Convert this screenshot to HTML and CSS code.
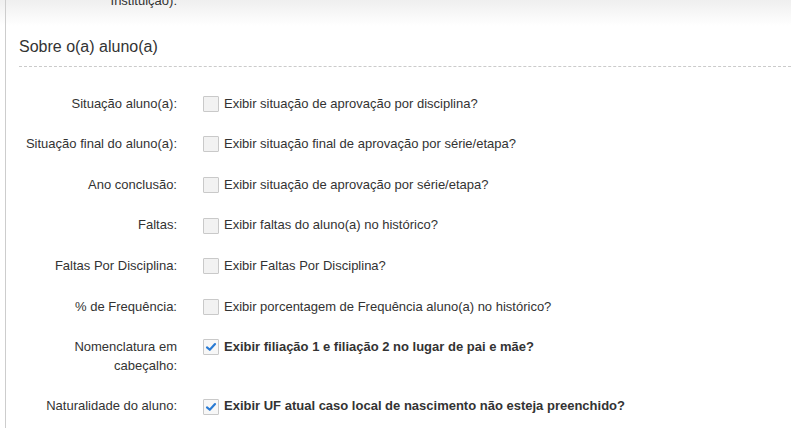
FILE: index.html
```html
<!DOCTYPE html>
<html lang="pt-BR">
<head>
<meta charset="utf-8">
<title>Sobre o(a) aluno(a)</title>
<link rel="stylesheet" href="styles.css">
</head>
<body>
<div class="panel">
  <div class="row row-top">
    <div class="label">Instituição):</div>
  </div>
  <h2 class="legend">Sobre o(a) aluno(a)</h2>

  <div class="row">
    <div class="label">Situação aluno(a):</div>
    <label class="check"><span class="box"></span><span>Exibir situação de aprovação por disciplina?</span></label>
  </div>
  <div class="row">
    <div class="label">Situação final do aluno(a):</div>
    <label class="check"><span class="box"></span><span>Exibir situação final de aprovação por série/etapa?</span></label>
  </div>
  <div class="row">
    <div class="label">Ano conclusão:</div>
    <label class="check"><span class="box"></span><span>Exibir situação de aprovação por série/etapa?</span></label>
  </div>
  <div class="row">
    <div class="label">Faltas:</div>
    <label class="check"><span class="box"></span><span>Exibir faltas do aluno(a) no histórico?</span></label>
  </div>
  <div class="row">
    <div class="label">Faltas Por Disciplina:</div>
    <label class="check"><span class="box"></span><span>Exibir Faltas Por Disciplina?</span></label>
  </div>
  <div class="row">
    <div class="label">% de Frequência:</div>
    <label class="check"><span class="box"></span><span>Exibir porcentagem de Frequência aluno(a) no histórico?</span></label>
  </div>
  <div class="row">
    <div class="label">Nomenclatura em<br>cabeçalho:</div>
    <label class="check checked"><span class="box"><svg viewBox="0 0 16 16" width="16" height="16"><path d="M3.4 8.4 L6.6 11.2 L12.6 4.6" fill="none" stroke="#2a7bd4" stroke-width="2.4" stroke-linecap="round" stroke-linejoin="round"/></svg></span><span>Exibir filiação 1 e filiação 2 no lugar de pai e mãe?</span></label>
  </div>
  <div class="row">
    <div class="label">Naturalidade do aluno:</div>
    <label class="check checked"><span class="box"><svg viewBox="0 0 16 16" width="16" height="16"><path d="M3.4 8.4 L6.6 11.2 L12.6 4.6" fill="none" stroke="#2a7bd4" stroke-width="2.4" stroke-linecap="round" stroke-linejoin="round"/></svg></span><span>Exibir UF atual caso local de nascimento não esteja preenchido?</span></label>
  </div>
</div>
</body>
</html>
```

FILE: styles.css
```css
html, body {
  margin: 0;
  padding: 0;
  height: 100%;
  overflow: hidden;
}
body {
  background: linear-gradient(to bottom, #efefef 0px, #ffffff 26px);
  font-family: "Liberation Sans", Arial, sans-serif;
  font-size: 13px;
  color: #333;
}
.panel {
  margin-left: 5px;
  border-left: 1px solid #cdcdcd;
  min-height: 100%;
  padding-left: 13px;
  box-sizing: border-box;
}
.row {
  display: flex;
  align-items: flex-start;
  margin-bottom: 15px;
  line-height: 18.6px;
}
.row-top {
  margin-top: -8px;
  margin-bottom: 0;
}
.label {
  width: 158px;
  flex: none;
  text-align: right;
  padding-top: 7px;
}
.row-top .label {
  padding-top: 0;
}
.legend {
  margin: 25px 0 21px 0;
  padding: 0 0 8px 0;
  font-size: 16px;
  font-weight: normal;
  line-height: 22px;
  color: #333;
  border-bottom: 1px dashed #cbcbcb;
}
.check {
  display: flex;
  align-items: center;
  margin-left: 26px;
  padding-top: 7px;
  gap: 5px;
}
.box {
  width: 14px;
  height: 14px;
  border: 1px solid #c9c9c9;
  background: #f2f2f2;
  border-radius: 1px;
  display: flex;
  align-items: center;
  justify-content: center;
  flex: none;
}
.box svg {
  width: 14px;
  height: 14px;
}
.checked .box {
  background: #f7f7f7;
}
.checked span:last-child {
  font-weight: bold;
}
```
